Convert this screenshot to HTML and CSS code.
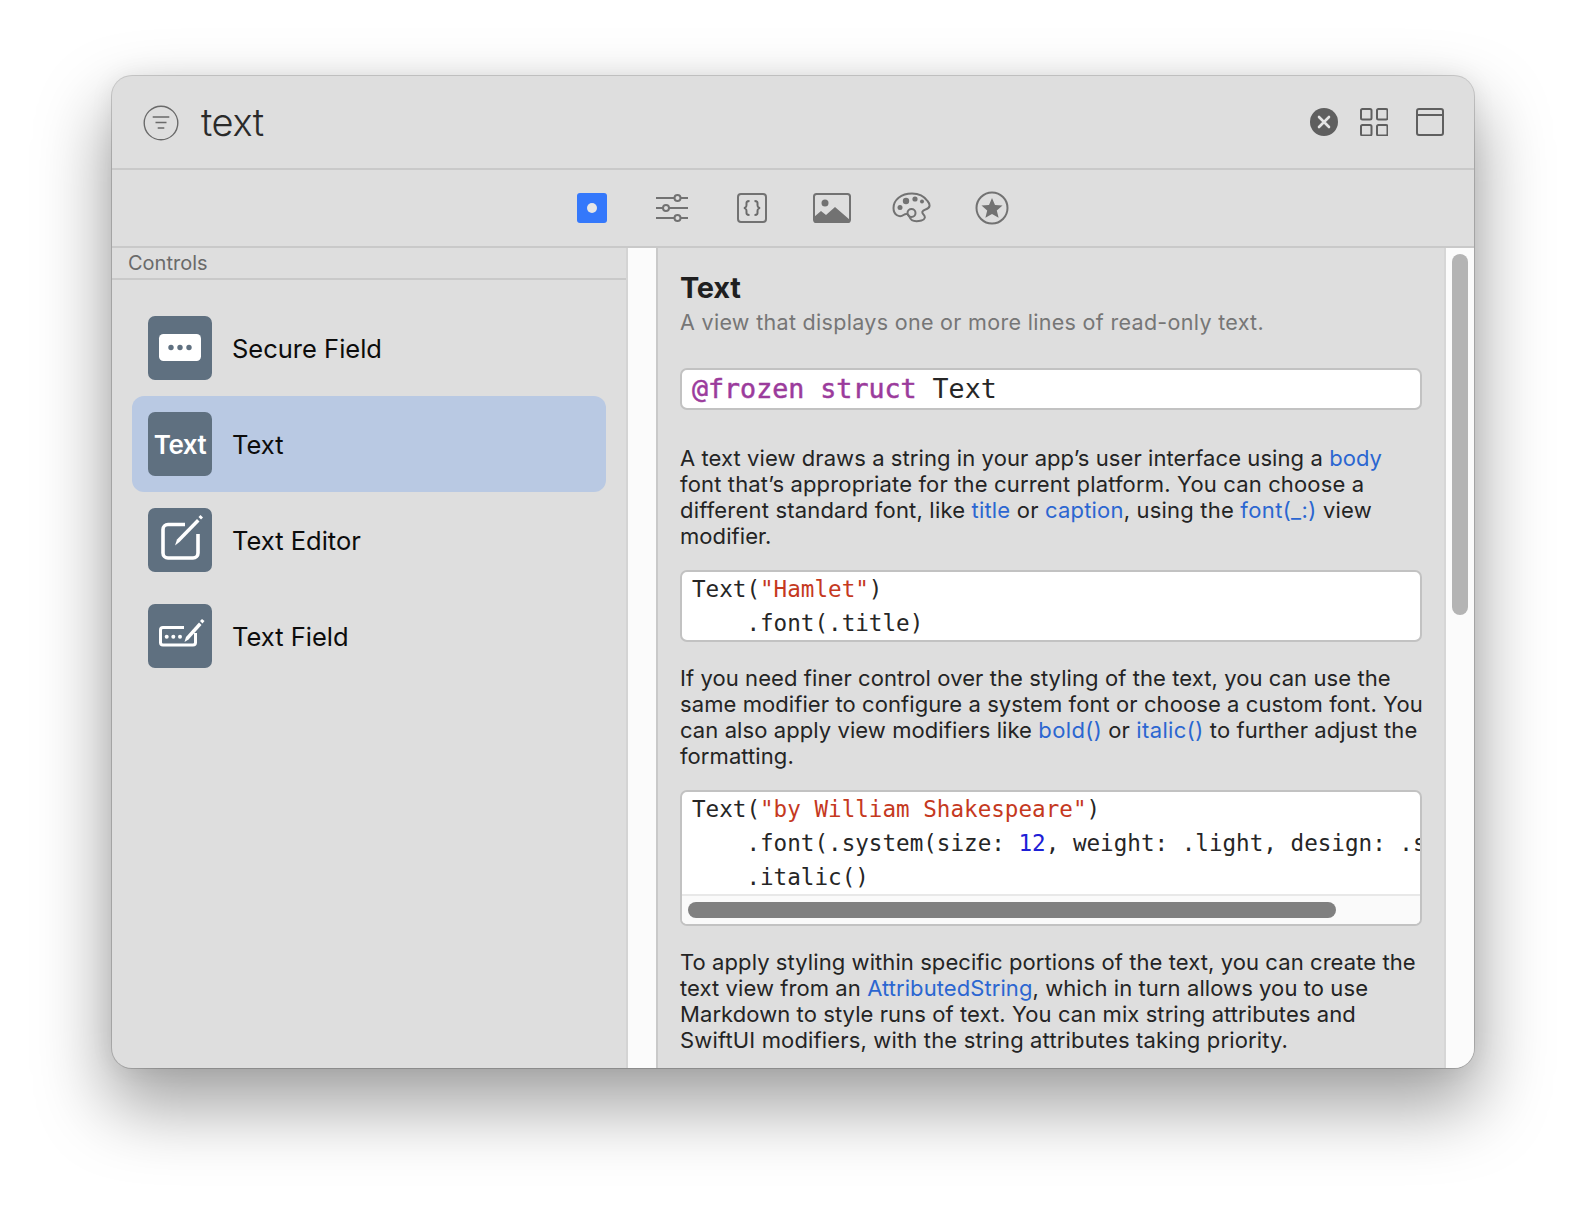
FILE: index.html
```html
<!DOCTYPE html>
<html lang="en">
<head>
<meta charset="utf-8">
<title>text</title>
<link rel="stylesheet" href="styles.css">
</head>
<body>
<div class="window">
  <header class="search">
    <svg class="filter" viewBox="0 0 36 36" width="36" height="36"><circle cx="18" cy="18" r="16.8"/><path d="M9.700 12h16.600M12.500 17.500h11M14.700 23h6.600"/></svg>
    <div class="query">text</div>
    <div class="search-tools">
      <svg class="clear" viewBox="0 0 28 28" width="28" height="28"><circle cx="14" cy="14" r="14"/><path d="M9 9l10 10M19 9L9 19"/></svg>
      <svg class="tool grid" viewBox="0 0 28 28" width="28" height="28"><rect x="1" y="1" width="10.500" height="10.500" rx="1.500"/><rect x="17" y="1" width="10.500" height="10.500" rx="1.500"/><rect x="1" y="17" width="10.500" height="10.500" rx="1.500"/><rect x="17" y="17" width="10.500" height="10.500" rx="1.500"/></svg>
      <svg class="tool panel" viewBox="0 0 28 28" width="28" height="28"><rect x="1" y="1" width="26" height="26" rx="2"/><path d="M1 7h26"/></svg>
    </div>
  </header>
  <nav class="tabs">
    <svg class="tab" viewBox="0 0 30 30" width="30" height="30"><rect width="30" height="30" rx="3" fill="#3478fb"/><circle cx="15" cy="15" r="5" fill="#e6e6e6"/></svg>
    <svg class="tab line" viewBox="0 0 34 30" width="34" height="30"><path d="M1 5h18.500M25.500 5h7.500M1 15h7M14 15h19M1 25h18.500M25.500 25h7.500"/><circle cx="22.500" cy="5" r="3"/><circle cx="11" cy="15" r="3"/><circle cx="22.500" cy="25" r="3"/></svg>
    <svg class="tab line" viewBox="0 0 30 30" width="30" height="30"><rect x="1" y="1" width="28" height="28" rx="3"/><path class="thin" d="M12.500 8c-3.500 0-3 1.500-3 3.500s0 3-2.500 3.500c2.500.5 2.500 1.500 2.500 3.500s-.5 3.500 3 3.500M17.500 8c3.500 0 3 1.500 3 3.500s0 3 2.500 3.500c-2.500.5-2.500 1.500-2.500 3.500s.5 3.500-3 3.500"/></svg>
    <svg class="tab line" viewBox="0 0 38 30" width="38" height="30"><rect x="1" y="1" width="36" height="28" rx="2.500"/><circle class="solid" cx="12" cy="10" r="3.500"/><path class="solid" d="M1 27l0-3 7-6 5 4 9-8 15 13v1a2 2 0 0 1-2 2H3a2 2 0 0 1-2-2z"/></svg>
    <svg class="tab line" viewBox="0 0 40 32" width="40" height="32"><path d="M20 1.500C9 1.500 1.500 8 1.500 16c0 7 6 10 10 7 3-2 5-1 6 2 1.500 4 6 5 12 3.500 4-1 4-4 2-6-2-2-1.500-4 2-5 5-1.500 5-5 2-8.500C32 4 26 1.500 20 1.500z"/><circle class="solid" cx="14" cy="9" r="3.200"/><circle class="solid" cx="23" cy="7" r="2.600"/><circle class="solid" cx="30" cy="9.500" r="2"/><circle class="solid" cx="8" cy="15.500" r="2.500"/><circle cx="19.500" cy="21" r="4"/></svg>
    <svg class="tab line" viewBox="0 0 34 34" width="34" height="34"><circle cx="17" cy="17" r="15.500"/><path class="solid" d="M17 7l3 7 7.500.6-5.700 4.900 1.800 7.300L17 22.900l-6.600 3.900 1.800-7.300-5.700-4.900 7.500-.6z"/></svg>
  </nav>
  <main class="body">
    <aside class="sidebar">
      <div class="section">Controls</div>
      <ul class="list">
        <li class="row">
          <span class="tile"><svg viewBox="0 0 64 64" width="64" height="64"><rect x="11" y="18" width="42" height="27" rx="4.500" fill="#fff"/><circle cx="23" cy="31.500" r="2.700" fill="#5f7080"/><circle cx="32" cy="31.500" r="2.700" fill="#5f7080"/><circle cx="41" cy="31.500" r="2.700" fill="#5f7080"/></svg></span>
          <span class="label">Secure Field</span>
        </li>
        <li class="row selected">
          <span class="tile tile-text">Text</span>
          <span class="label">Text</span>
        </li>
        <li class="row">
          <span class="tile"><svg class="glyph" viewBox="0 0 64 64" width="64" height="64"><path d="M37 16.500H20a5 5 0 0 0-5 5V45a5 5 0 0 0 5 5h25a5 5 0 0 0 5-5V26"/><path class="pen" d="M27 37.500l2-6 20-20.500 2.500 2.500-20 20.500z"/><path class="tip" d="M50.500 9l2-2 2.500 2.500-2 2z"/></svg></span>
          <span class="label">Text Editor</span>
        </li>
        <li class="row">
          <span class="tile"><svg class="glyph" viewBox="0 0 64 64" width="64" height="64"><path class="slim" d="M36 23.500H15a2.500 2.500 0 0 0-2.500 2.500v12.500a2.500 2.500 0 0 0 2.500 2.500h30a2.500 2.500 0 0 0 2.500-2.500V29"/><circle class="tip" cx="18.700" cy="32.700" r="2"/><circle class="tip" cx="25.300" cy="32.700" r="2"/><circle class="tip" cx="32" cy="32.700" r="2"/><path class="pen" d="M36.500 38l1.500-5 13-14.500 2.500 2.500-13 14.500z"/><path class="tip" d="M52 17l2-2 2.500 2-2 2.500z"/></svg></span>
          <span class="label">Text Field</span>
        </li>
      </ul>
    </aside>
    <div class="splitter"></div>
    <article class="doc">
      <h1 class="title">Text</h1>
      <p class="subtitle">A view that displays one or more lines of read-only text.</p>
      <pre class="code decl"><span class="kw">@frozen struct</span> Text</pre>
      <p class="para">A text view draws a string in your app’s user interface using a <a>body</a><br><span class="wide">font that’s appropriate for the current platform. You can choose a</span><br><span class="wider">different standard font, like <a>title</a> or <a>caption</a>, using the <a class="fn">font(_:)</a> view</span><br>modifier.</p>
      <pre class="code snippet">Text(<span class="str">"Hamlet"</span>)
    .font(.title)</pre>
      <p class="para">If you need finer control over the styling of the text, you can use the<br>same modifier to configure a system font or choose a custom font. You<br>can also apply view modifiers like <a class="fn">bold()</a> or <a class="fn">italic()</a> to further adjust the<br>formatting.</p>
      <div class="code scroller">
        <pre class="scroll-text">Text(<span class="str">"by William Shakespeare"</span>)
    .font(.system(size: <span class="num">12</span>, weight: .light, design: .serif))
    .italic()</pre>
        <div class="hbar"><div class="hthumb"></div></div>
      </div>
      <p class="para">To apply styling within specific portions of the text, you can create the<br>text view from an <a>AttributedString</a>, which in turn allows you to use<br>Markdown to style runs of text. You can mix string attributes and<br><span class="wide">SwiftUI modifiers, with the string attributes taking priority.</span></p>
    </article>
    <div class="vbar"><div class="vthumb"></div></div>
  </main>
</div>
</body>
</html>
```
FILE: styles.css
```css
* { box-sizing: border-box; }
html, body { margin: 0; height: 100%; }
body {
  background: #fff;
  padding: 76px 112px 0 112px;
  font-family: Inter, "Liberation Sans", sans-serif;
  overflow: hidden;
}
.window {
  width: 1362px;
  height: 992px;
  background: #dedede;
  border-radius: 20px;
  overflow: hidden;
  display: flex;
  flex-direction: column;
  box-shadow: 0 0 0 1px rgba(0,0,0,.17), 0 35px 70px 5px rgba(0,0,0,.36), 0 0 24px rgba(0,0,0,.07);
}
.search {
  height: 94px;
  flex: none;
  display: flex;
  align-items: center;
  padding: 0 30px 0 31px;
  border-bottom: 2px solid #c9c9c9;
}
.filter { fill: none; stroke: #6a6a6a; stroke-width: 1.400; margin-top: 2px; }
.query {
  margin-left: 22px;
  font-size: 38px;
  font-weight: 300;
  color: #2a2a2a;
  letter-spacing: -.4px;
}
.search-tools { margin-left: auto; display: flex; align-items: center; gap: 24px; }
.clear { margin-right: -2px; }
.clear circle { fill: #5f5f5f; }
.clear path { stroke: #e4e4e4; stroke-width: 2.600; fill: none; stroke-linecap: round; }
.tool { fill: none; stroke: #5f5f5f; stroke-width: 2; }
.panel { margin-left: 4px; }
.tabs {
  height: 78px;
  flex: none;
  display: grid;
  grid-template-columns: repeat(6, 80px);
  justify-content: center;
  justify-items: center;
  align-items: center;
  padding-right: 2px;
  border-bottom: 2px solid #c9c9c9;
}
.line { fill: none; stroke: #727272; stroke-width: 2; }
.line .solid { fill: #727272; stroke: none; }
.line .thin { stroke-width: 2; stroke: #6a6a6a; }
.body { flex: 1; min-height: 0; display: flex; }
.sidebar { width: 516px; flex: none; border-right: 2px solid #d4d4d4; }
.section {
  height: 32px;
  padding: 2px 0 0 16px;
  font-size: 20px;
  line-height: 26px;
  color: #6a6a6a;
  border-bottom: 2px solid #c9c9c9;
}
.list { list-style: none; margin: 20px 0 0; padding: 0 20px 0 20px; }
.row {
  height: 96px;
  padding-left: 16px;
  display: flex;
  align-items: center;
  border-radius: 12px;
}
.row.selected { background: #b9c9e3; }
.tile {
  width: 64px;
  height: 64px;
  flex: none;
  display: flex;
  align-items: center;
  justify-content: center;
  border-radius: 7px;
  background: #5f7080;
  color: #fff;
}
.tile-text { font-size: 26px; font-weight: 600; letter-spacing: -.5px; padding-top: 1px; }
.label { margin-left: 20px; font-size: 25.500px; color: #0c0c0c; }
.glyph { fill: none; stroke: #fff; stroke-width: 3.600; }
.glyph .slim { stroke-width: 3; }
.glyph .pen { fill: #fff; stroke: none; }
.glyph .tip { fill: #fff; stroke: none; }
.splitter { width: 30px; flex: none; background: #fbfbfb; border-right: 2px solid #c9c9c9; }
.doc { flex: 1; min-width: 0; padding: 20px 22px 0 22px; overflow: hidden; color: #242424; }
.title { margin: 0; font-size: 29px; line-height: 40px; font-weight: 700; color: #1f1f1f; letter-spacing: -.25px; }
.subtitle { margin: 0; font-size: 21.500px; line-height: 28px; color: #767676; letter-spacing: .31px; }
.para { margin: 0; font-size: 22px; line-height: 26px; white-space: nowrap; letter-spacing: .08px; }
.para a { color: #2b66d1; }
.para a.fn { letter-spacing: .38px; }
.wide { letter-spacing: .15px; }
.wider { letter-spacing: .19px; }
.code {
  background: #fff;
  border: 2px solid #c2c2c2;
  border-radius: 7px;
  font-family: "DejaVu Sans Mono", "Liberation Mono", monospace;
  color: #262626;
  overflow: hidden;
}
.decl { margin: 32px 0 35px; height: 42px; padding: 0 10px; font-size: 26.650px; line-height: 38px; }
.kw { color: #9b3b9c; -webkit-text-stroke: .5px #9b3b9c; }
.snippet { margin: 21px 0 23px; height: 72px; padding: 0 10px; font-size: 22.600px; line-height: 34px; }
.str { color: #c5391e; }
.num { color: #1d20d6; }
.scroller { margin: 21px 0 23px; height: 136px; font-size: 22.600px; }
.scroll-text { margin: 0; height: 102px; padding: 0 10px; line-height: 34px; overflow: hidden; }
.hbar { height: 30px; background: #fafafa; border-top: 2px solid #e8e8e8; padding: 6px 0 0 6px; }
.hthumb { width: 648px; height: 16px; border-radius: 8px; background: #808080; }
.vbar { width: 30px; flex: none; background: #fbfbfb; border-left: 2px solid #d6d6d6; padding: 6px 6px 0 6px; }
.vthumb { height: 361px; border-radius: 8px; background: #b4b4b4; }
```
